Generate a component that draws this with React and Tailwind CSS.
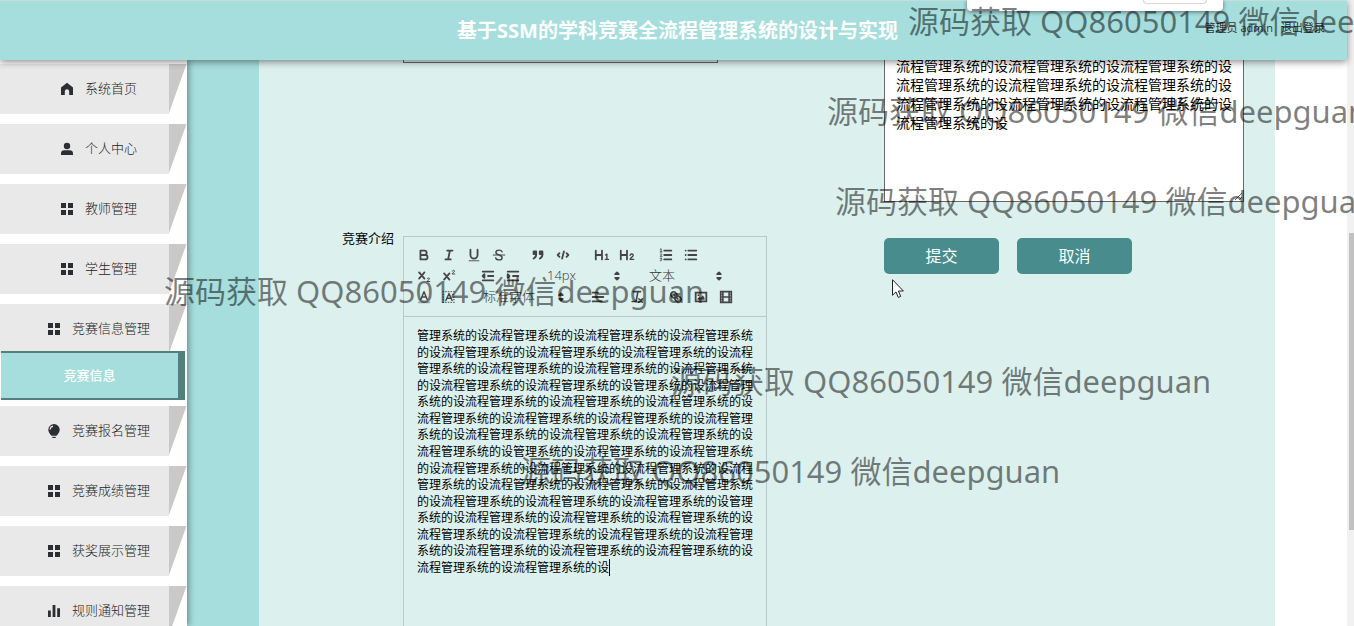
import React from "react";

const U = "流程管理系统的设";
const LINE_A = "管理系统的设" + U + U + "流程管理系统";
const LINE_B = "的设" + U + U + U + "流程";
const LINE_C = "系统的设" + U + U + U;
const LINE_D = U + U + U + "流程管理";

const introLines = [
  LINE_A,
  LINE_B,
  LINE_A,
  "的设" + U + U + "管理系统的设流程管理",
  LINE_C,
  LINE_D,
  LINE_C,
  U + "管理系统的设" + U + "流程管理系统",
  LINE_B,
  LINE_A,
  "的设" + U + U + U + "管理",
  LINE_C,
  LINE_D,
  LINE_C,
];

const summaryText = [U + U + U, U + U + U, U + U + U, U].join("\n");

/* ---------- sidebar ---------- */

function HomeIcon() {
  return (
    <svg viewBox="0 0 14 14" className="size-3.5 fill-[#2b2f33]" aria-hidden="true">
      <path d="M7 .8 1 5.600V13h3.800V9.500a2.200 2.200 0 0 1 4.400 0V13H13V5.600z" />
    </svg>
  );
}

function UserIcon() {
  return (
    <svg viewBox="0 0 14 14" className="size-3.5 fill-[#2b2f33]" aria-hidden="true">
      <circle cx="7" cy="4" r="3.2" />
      <path d="M1 13v-1.6C1 9.500 2.300 8.300 4.200 8.300h5.600c1.900 0 3.200 1.200 3.200 3.100V13z" />
    </svg>
  );
}

function GridIcon() {
  return (
    <svg viewBox="0 0 14 14" className="size-3.5 fill-[#2b2f33]" aria-hidden="true">
      <path d="M1 1h5v5H1zM8 1h5v5H8zM1 8h5v5H1zM8 8h5v5H8z" />
    </svg>
  );
}

function BulbIcon() {
  return (
    <svg viewBox="0 0 14 14" className="size-3.5" aria-hidden="true">
      <path d="M7 0a5.700 5.700 0 0 1 5.700 5.700c0 2.400-1.700 4.400-3.200 6.100h-5C3 10.100 1.300 8.100 1.300 5.700A5.700 5.700 0 0 1 7 0z" fill="#2b2f33" />
      <path d="M3 5.500A3.900 3.900 0 0 1 6 2.200" fill="none" stroke="#e9e9e9" strokeWidth="1.200" />
      <path d="M5.300 12.800h3.400V14H5.300z" fill="#2b2f33" />
    </svg>
  );
}

function BarsIcon() {
  return (
    <svg viewBox="0 0 14 14" className="size-3.5 fill-[#2b2f33]" aria-hidden="true">
      <path d="M1 6.500h2.800V13H1zM5.600 1h2.800v12H5.600zM10.200 4.200H13V13h-2.800z" />
    </svg>
  );
}

function NavItem({ icon: Icon, children }) {
  return (
    <li className="flex h-[50px]">
      <a
        href="#"
        className="flex flex-1 items-center justify-center gap-[11px] bg-[#e9e9e9] pl-7 text-[13px] font-light text-[#222]"
      >
        <Icon />
        {children}
      </a>
      <svg viewBox="0 0 18 50" preserveAspectRatio="none" className="h-full w-[18px]" aria-hidden="true">
        <path d="M0 0h17.500L0 49z" fill="#cac8c8" />
      </svg>
    </li>
  );
}

function Sidebar() {
  return (
    <aside className="z-10 w-[187px] shrink-0 bg-white pt-1 shadow-[2px_0_6px_rgba(0,0,0,0.35)]">
      <nav>
        <ul className="flex flex-col gap-2.5">
          <NavItem icon={HomeIcon}>系统首页</NavItem>
          <NavItem icon={UserIcon}>个人中心</NavItem>
          <NavItem icon={GridIcon}>教师管理</NavItem>
          <NavItem icon={GridIcon}>学生管理</NavItem>
          <NavItem icon={GridIcon}>竞赛信息管理</NavItem>
        </ul>
        <a
          href="#"
          className="relative -mt-[3px] mr-0.5 ml-px flex h-[49px] items-center justify-center border-y-2 border-r-[7px] border-[#51807f] bg-[#a5dedd] text-[13px] font-medium text-white"
        >
          竞赛信息
        </a>
        <ul className="mt-1.5 flex flex-col gap-2.5">
          <NavItem icon={BulbIcon}>竞赛报名管理</NavItem>
          <NavItem icon={GridIcon}>竞赛成绩管理</NavItem>
          <NavItem icon={GridIcon}>获奖展示管理</NavItem>
          <NavItem icon={BarsIcon}>规则通知管理</NavItem>
        </ul>
      </nav>
    </aside>
  );
}

/* ---------- rich text toolbar ---------- */

function Tool({ label, children }) {
  return (
    <button type="button" aria-label={label} title={label} className="flex h-[21px] w-[25px] items-center justify-center">
      <svg
        viewBox="0 0 18 18"
        className="size-4"
        fill="none"
        stroke="#444"
        strokeWidth="2"
        strokeLinecap="round"
        strokeLinejoin="round"
        aria-hidden="true"
      >
        {children}
      </svg>
    </button>
  );
}

function Picker({ label, value, wide }) {
  return (
    <label className={`relative flex h-[21px] items-center ${wide ? "w-24" : "w-[88px]"}`}>
      <span className="sr-only">{label}</span>
      <select className="h-full w-full appearance-none bg-transparent pl-2 text-[13px] font-light text-[#333] outline-none">
        <option>{value}</option>
      </select>
      <svg viewBox="0 0 18 18" className="pointer-events-none absolute right-0.5 size-4 fill-[#444] stroke-[#444] stroke-2" strokeLinejoin="round" aria-hidden="true">
        <path d="M7 11 9 13 11 11z" />
        <path d="M7 7 9 5 11 7z" />
      </svg>
    </label>
  );
}

function Group({ children }) {
  return <div className="flex">{children}</div>;
}

const solid = { fill: "#444", stroke: "none" };

function Toolbar() {
  return (
    <div className="flex flex-wrap gap-x-3.5 border-b border-[#b9c9c8] px-[7px] pt-[7px] pb-[9px]">
      <Group>
        <Tool label="加粗">
          <path d="M5 4h4.500A2.500 2.500 0 0 1 12 6.500 2.500 2.500 0 0 1 9.500 9H5zM5 9h5.500a2.500 2.500 0 0 1 0 5H5z" />
        </Tool>
        <Tool label="斜体">
          <path d="M7 4h6M5 14h6M8 14l2-10" />
        </Tool>
        <Tool label="下划线">
          <path d="M5 3v6a4.012 4.012 0 0 0 4 4 4.012 4.012 0 0 0 4-4V3" />
          <path d="M3.500 15.500h11" strokeWidth="1" />
        </Tool>
        <Tool label="删除线">
          <path d="M2.500 9h13" strokeWidth="1.200" />
          <path d="M12.500 5.500C12 4 10.800 3.500 9 3.500c-2.200 0-3.500 1-3.500 2.500C5.500 8 7.500 8.500 9 9c2 .6 3.500 1.200 3.500 3 0 1.600-1.400 2.500-3.500 2.500-2 0-3.300-.8-3.700-2.200" strokeWidth="1.600" />
        </Tool>
      </Group>
      <Group>
        <Tool label="引用">
          <g fill="#444">
            <path d="M4 5h3v3H4zM11 5h3v3h-3z" />
          </g>
          <path d="M7 8c0 4.031-3 5-3 5M14 8c0 4.031-3 5-3 5" />
        </Tool>
        <Tool label="代码">
          <path d="M5 7 3 9l2 2M13 7l2 2-2 2M10 5l-2 8" />
        </Tool>
      </Group>
      <Group>
        <Tool label="标题1">
          <path d="M2 4v10M9 4v10M2 9h7" />
          <path d="M13 9l1.500-1v6M12.700 14h3.600" strokeWidth="1.500" />
        </Tool>
        <Tool label="标题2">
          <path d="M2 4v10M9 4v10M2 9h7" />
          <path d="M12.500 9.300c.3-2 3.500-1.800 3.500.2 0 1.500-3.500 2.500-3.500 4.500H16.500" strokeWidth="1.500" />
        </Tool>
      </Group>
      <Group>
        <Tool label="有序列表">
          <path d="M7 4h8M7 9h8M7 14h8" />
          <path d="M2.500 2.500l1-.5v3.500M2.500 5.500h2M2.500 8c1.500-1 2.200.3 1.200 1.200L2.500 10.500h2M2.500 12.700h1.800l-1 1.100c1.500 0 1.400 1.900-.8 1.700" strokeWidth="1" />
        </Tool>
        <Tool label="无序列表">
          <path d="M6 4h9M6 9h9M6 14h9M3 4h0M3 9h0M3 14h0" />
        </Tool>
      </Group>
      <Group>
        <Tool label="下标">
          <path d="M3.500 5l6 7M9.500 5l-6 7" />
          <path d="M12.700 12c.3-1.300 2.600-1.100 2.500.2 0 1-2.600 1.600-2.700 3h3" strokeWidth="1.100" />
        </Tool>
        <Tool label="上标">
          <path d="M3.500 6l6 7M9.500 6l-6 7" />
          <path d="M12.700 3.500c.3-1.300 2.600-1.100 2.500.2 0 1-2.600 1.600-2.700 3h3" strokeWidth="1.100" />
        </Tool>
      </Group>
      <Group>
        <Tool label="减少缩进">
          <path d="M3 14h12M3 4h12M9 9h6M5 7v4L3 9z" />
        </Tool>
        <Tool label="增加缩进">
          <path d="M3 14h12M3 4h12M9 9h6" />
          <path d="M3 7v4l2-2z" fill="#444" />
        </Tool>
      </Group>
      <Picker label="字号" value="14px" />
      <Picker label="标题格式" value="文本" />
      <Group>
        <Tool label="字体颜色">
          <path d="M3 15h12" strokeOpacity="0.4" />
          <path d="M5.500 11.500 9 3l3.500 8.500M6.700 9h4.600" strokeWidth="1.600" />
        </Tool>
        <Tool label="背景颜色">
          <path d="M2 3h14M2 6h3M13 6h3M2 9h2M14 9h2M2 12h2M14 12h2M2 15h14" strokeWidth="1" strokeDasharray="1 2" />
          <path d="M5.500 13 9 5l3.500 8M6.700 10.500h4.600" strokeWidth="1.600" />
        </Tool>
      </Group>
      <Picker label="字体" value="标准字体" wide />
      <Tool label="对齐方式">
        <path d="M3 9h12M3 14h10M3 4h6" />
      </Tool>
      <Tool label="清除格式">
        <path d="M5 3h8M8 14l2-11M3.500 14h3" strokeWidth="1.800" />
        <path d="M11 11l4 4M15 11l-4 4" strokeWidth="1.500" />
      </Tool>
      <Group>
        <Tool label="链接">
          <path d="M7 7l4 4" />
          <path d="M8.900 4.577a3.476 3.476 0 0 1 .36 4.679A3.476 3.476 0 0 1 4.577 8.900C3.185 7.500 2.035 6.400 4.217 4.217S7.500 3.185 8.900 4.577z" />
          <path d="M13.423 9.100a3.476 3.476 0 0 0-4.679-.36 3.476 3.476 0 0 0 .36 4.679c1.392 1.392 2.500 2.542 4.679.36s1.032-3.287-.36-4.679z" />
        </Tool>
        <Tool label="图片">
          <path d="M3 4h12v10H3z" strokeLinejoin="miter" />
          <circle cx="6" cy="7" r="1" {...solid} />
          <path d="M5 12v-1l2-2 1.500 1L11 7l2 3v2z" {...solid} />
        </Tool>
        <Tool label="视频">
          <path d="M3 3h12v12H3zM5.500 3v12M12.500 3v12M5 9h8" strokeWidth="1.800" strokeLinejoin="miter" />
          <path d="M3 6h2M3 9h2M3 12h2M13 6h2M13 9h2M13 12h2" strokeWidth="1" />
        </Tool>
      </Group>
    </div>
  );
}

function Editor() {
  return (
    <div className="h-[520px] w-[364px] max-w-full border border-[#b9c9c8]">
      <Toolbar />
      <div
        role="textbox"
        aria-multiline="true"
        aria-labelledby="intro-label"
        contentEditable
        suppressContentEditableWarning
        className="grid h-[270px] content-between px-[13px] py-[11px] text-xs leading-4 whitespace-nowrap text-black outline-none"
      >
        {introLines.map((line, i) => (
          <p key={i}>{line}</p>
        ))}
        <p>
          <span className="border-r border-black">{U + U}</span>
        </p>
      </div>
    </div>
  );
}

/* ---------- page ---------- */

function Header() {
  return (
    <header className="relative z-20 grid h-[60px] shrink-0 grid-cols-[1fr_auto_1fr] items-center border-t border-[#c9dcdc] bg-[#a5dedd] pl-2 shadow-[0_2px_7px_rgba(0,0,0,0.45)]">
      <h1 className="col-start-2 text-xl font-bold text-white">基于SSM的学科竞赛全流程管理系统的设计与实现</h1>
      <div className="flex justify-end gap-2 pr-[22px] pb-1 text-[11px] text-[#333]">
        <span>管理员 admin</span>
        <a href="#">退出登录</a>
      </div>
      <div className="absolute -top-px right-[124px] flex h-[11px] w-64 justify-end rounded-b-sm bg-white pr-4 shadow-[0_1px_4px_rgba(0,0,0,0.5)]">
        <div className="h-1 w-16 rounded-b border border-t-0 border-[#d3d6dc]" />
      </div>
    </header>
  );
}

function FormPage() {
  return (
    <main className="flex-1 overflow-hidden bg-[linear-gradient(to_right,#a5dedd_72px,white_72px)] px-[72px]">
      <form className="grid h-full grid-cols-[135px_minmax(0,472fr)_minmax(0,391fr)] grid-rows-[142px_1fr] gap-x-[9px] gap-y-[34px] bg-[#dcf0ee]">
        <input
          type="text"
          aria-label="竞赛名称"
          className="col-start-2 h-[3px] w-[315px] border border-t-0 border-[#666] bg-transparent outline-none"
        />
        <textarea
          aria-label="竞赛内容"
          defaultValue={summaryText}
          className="-mt-1 h-[146px] w-[360px] overflow-hidden border border-t-0 border-[#666] bg-white px-[11px] text-sm leading-[19px] text-black outline-none"
        />
        <span id="intro-label" className="-mt-1 text-right text-[13px] leading-none text-black">
          竞赛介绍
        </span>
        <Editor />
        <div className="flex items-start gap-[18px] pt-0.5 text-base text-white">
          <button type="submit" className="h-9 w-[115px] rounded-[5px] bg-[#488c8e]">
            提交
          </button>
          <button type="button" className="h-9 w-[115px] rounded-[5px] bg-[#488c8e]">
            取消
          </button>
        </div>
      </form>
    </main>
  );
}

function PageScrollbar() {
  return (
    <div className="flex w-[7px] shrink-0 flex-col items-end bg-[#f1f1f1] pt-[233px]" aria-hidden="true">
      <div className="h-[297px] w-[5px] bg-[#c1c1c1]" />
    </div>
  );
}

const watermarkText = "源码获取 QQ86050149 微信deepguan";

function Watermark({ className }) {
  return <span className={`absolute ${className}`}>{watermarkText}</span>;
}

export default function App() {
  return (
    <div className="relative flex h-screen overflow-hidden bg-white font-['Open_Sans','Noto_Sans_CJK_SC',sans-serif]">
      <div className="flex min-w-0 flex-1 flex-col">
        <Header />
        <div className="flex min-h-0 flex-1">
          <Sidebar />
          <FormPage />
        </div>
      </div>
      <PageScrollbar />

      <div className="pointer-events-none absolute inset-0 z-30 overflow-hidden font-['Noto_Sans','Noto_Sans_CJK_SC',sans-serif] text-[31px] leading-10 whitespace-nowrap text-black/50">
        <Watermark className="top-px left-[908px]" />
        <Watermark className="top-[91px] left-[827px]" />
        <Watermark className="top-[181px] left-[835px]" />
        <Watermark className="top-[271px] left-[164px]" />
        <Watermark className="top-[361px] left-[671px]" />
        <Watermark className="top-[451px] left-[520px]" />
      </div>

      <svg viewBox="0 0 12 20" className="pointer-events-none absolute top-[279px] left-[892px] z-40 h-5 w-3" aria-hidden="true">
        <path d="M.5.7v15.600l3.500-3.400 2.300 5.500 2.400-1-2.300-5.400h5z" fill="white" stroke="#222" />
      </svg>
    </div>
  );
}
